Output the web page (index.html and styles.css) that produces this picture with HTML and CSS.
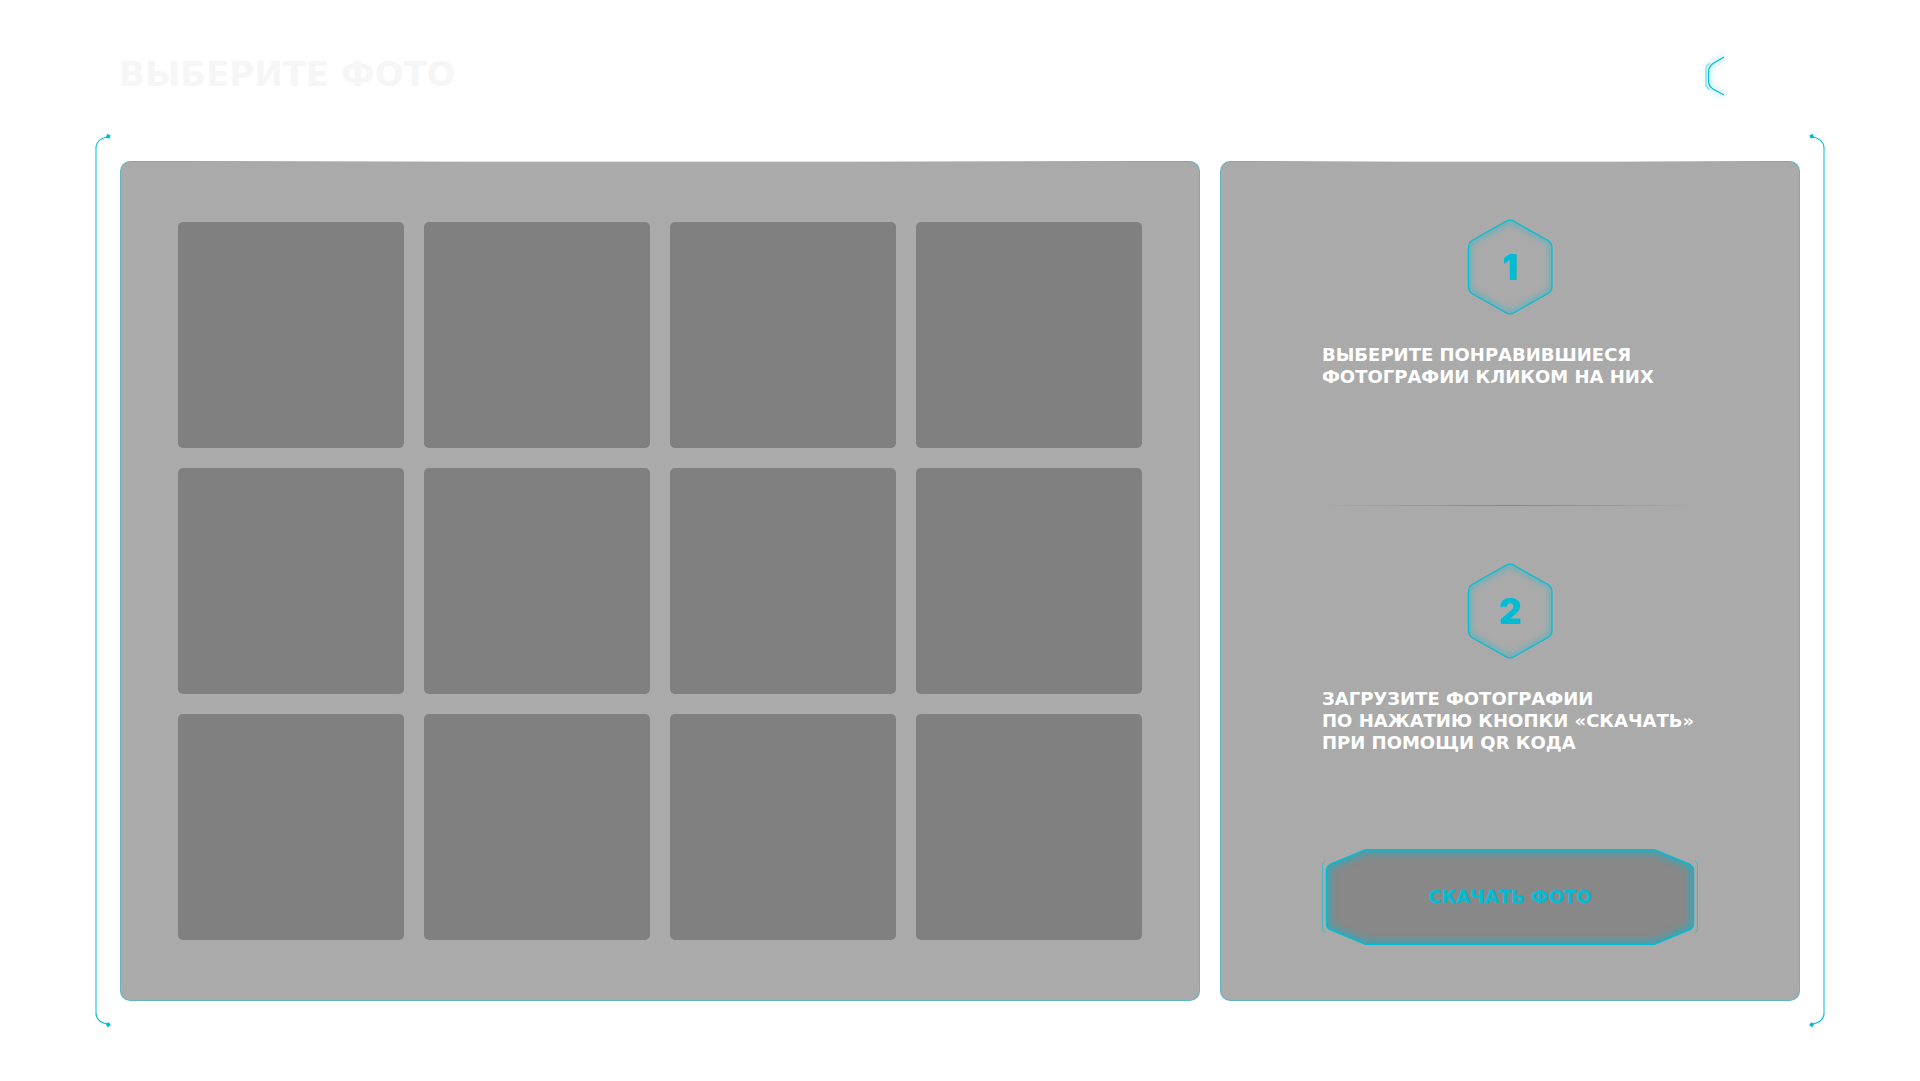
FILE: index.html
```html
<!DOCTYPE html>
<html lang="ru">
<head>
<meta charset="utf-8">
<meta name="viewport" content="width=device-width, initial-scale=1">
<title>Выберите фото</title>
<link rel="stylesheet" href="styles.css">
</head>
<body>
<svg class="defs" aria-hidden="true">
  <defs>
    <filter id="glow" x="-20%" y="-20%" width="140%" height="140%"><feGaussianBlur stdDeviation="3"/></filter>
    <path id="hex" d="M40 2.300Q44 0 48 2.300L82 21.500Q86 24 86 28.500V67.500Q86 72 82 74.500L48 93.700Q44 96 40 93.700L6 74.500Q2.500 72 2.500 67.500V28.500Q2.500 24 6 21.500Z"/>
    <clipPath id="hex-clip"><use href="#hex"/></clipPath>
    <path id="corner" d="M1 15V14Q2 6 12 4"/>
    <path id="dot" d="M12.500 .8L15.800 2.700L14 5.800L10.600 4.300Z"/>
  </defs>
</svg>
<header class="header">
  <h1 class="title">ВЫБЕРИТЕ ФОТО</h1>
  <button class="back" type="button" aria-label="Назад">
    <svg width="20" height="42" viewBox="0 0 20 42" fill="none" stroke="#00bcd4">
      <path d="M19 2L8 8.500Q3.500 12 3.500 17V26Q3.500 31 8 34L19 40" stroke-width="4" opacity=".3" filter="url(#glow)"/>
      <path d="M5 8.500Q1 10 1 15V28Q1 33 5 34.500" stroke-width="1.500" opacity=".4"/>
      <path d="M19 2L8 8.500Q3.500 12 3.500 17V26Q3.500 31 8 34L19 40" stroke-width="1.200"/>
    </svg>
  </button>
</header>
<main class="frame">
  <div class="bracket" aria-hidden="true">
    <svg width="16" height="15" viewBox="0 0 16 15"><use href="#corner" class="stroke"/><use href="#dot" class="dot"/></svg>
    <span class="rail"></span>
    <svg class="flip-y" width="16" height="15" viewBox="0 0 16 15"><use href="#corner" class="stroke"/><use href="#dot" class="dot"/></svg>
  </div>
  <div class="panels">
    <section class="panel gallery" aria-label="Фотографии">
      <button class="photo" type="button" aria-label="Фото 1"></button>
      <button class="photo" type="button" aria-label="Фото 2"></button>
      <button class="photo" type="button" aria-label="Фото 3"></button>
      <button class="photo" type="button" aria-label="Фото 4"></button>
      <button class="photo" type="button" aria-label="Фото 5"></button>
      <button class="photo" type="button" aria-label="Фото 6"></button>
      <button class="photo" type="button" aria-label="Фото 7"></button>
      <button class="photo" type="button" aria-label="Фото 8"></button>
      <button class="photo" type="button" aria-label="Фото 9"></button>
      <button class="photo" type="button" aria-label="Фото 10"></button>
      <button class="photo" type="button" aria-label="Фото 11"></button>
      <button class="photo" type="button" aria-label="Фото 12"></button>
    </section>
    <section class="panel guide">
      <div class="guide-body">
        <div class="step">
          <div class="badge">
            <svg class="backdrop" width="88" height="96" viewBox="0 0 88 96" fill="none" stroke="#00bcd4">
              <g clip-path="url(#hex-clip)"><use href="#hex" stroke-width="5" opacity=".5" filter="url(#glow)"/></g>
              <use href="#hex" stroke-width="1.200"/>
            </svg>
            <span class="number">1</span>
          </div>
          <p class="text">ВЫБЕРИТЕ ПОНРАВИВШИЕСЯ<br>ФОТОГРАФИИ КЛИКОМ НА НИХ</p>
        </div>
        <hr class="divider">
        <div class="step">
          <div class="badge">
            <svg class="backdrop" width="88" height="96" viewBox="0 0 88 96" fill="none" stroke="#00bcd4">
              <g clip-path="url(#hex-clip)"><use href="#hex" stroke-width="5" opacity=".5" filter="url(#glow)"/></g>
              <use href="#hex" stroke-width="1.200"/>
            </svg>
            <span class="number">2</span>
          </div>
          <p class="text">ЗАГРУЗИТЕ ФОТОГРАФИИ<br>ПО НАЖАТИЮ КНОПКИ «СКАЧАТЬ»<br>ПРИ ПОМОЩИ QR КОДА</p>
        </div>
        <button class="download" type="button">
          <svg class="backdrop" width="376" height="96" viewBox="0 0 376 96" fill="none" stroke="#00bcd4" aria-hidden="true">
            <defs>
              <path id="plate" d="M43.500 .7H332.500L368 15.500Q371.500 17.500 371.500 21V75Q371.500 78.500 368 80.500L332.500 95.300H43.500L8 80.500Q4.500 78.500 4.500 75V21Q4.500 17.500 8 15.500Z"/>
              <clipPath id="plate-clip"><use href="#plate"/></clipPath>
            </defs>
            <use href="#plate" fill="#888" stroke="none"/>
            <g clip-path="url(#plate-clip)"><use href="#plate" stroke-width="9" opacity=".5" filter="url(#glow)"/></g>
            <use href="#plate" stroke-width="1.400"/>
            <path d="M3 12Q.5 13 .5 17V79Q.5 83 3 84M373 12Q375.500 13 375.500 17V79Q375.500 83 373 84" opacity=".55"/>
          </svg>
          <span class="label">СКАЧАТЬ ФОТО</span>
        </button>
      </div>
    </section>
  </div>
  <div class="bracket flip-x" aria-hidden="true">
    <svg width="16" height="15" viewBox="0 0 16 15"><use href="#corner" class="stroke"/><use href="#dot" class="dot"/></svg>
    <span class="rail"></span>
    <svg class="flip-y" width="16" height="15" viewBox="0 0 16 15"><use href="#corner" class="stroke"/><use href="#dot" class="dot"/></svg>
  </div>
</main>
</body>
</html>
```

FILE: styles.css
```css
* { box-sizing: border-box; }

body {
  margin: 0;
  background: #fff;
  color: #fff;
  font-family: "DejaVu Sans", "Noto Sans", sans-serif;
  font-weight: 700;
}

button {
  padding: 0;
  border: 0;
  background: none;
  font: inherit;
  cursor: pointer;
}

svg { display: block; overflow: visible; }

.defs { position: absolute; width: 0; height: 0; }

.header {
  display: flex;
  justify-content: space-between;
  align-items: flex-start;
  padding: 55px 195px 36px 119px;
}

.title {
  margin: 0;
  color: #f6f6f6;
  font-size: 34px;
  line-height: 38px;
}

.frame {
  display: grid;
  grid-template-columns: 16px 1fr 16px;
  gap: 9px;
  padding: 0 95px 48px;
}

.bracket { display: flex; flex-direction: column; }
.rail { flex: 1; width: 2px; background: #80dee9; }
.stroke { fill: none; stroke: #00bcd4; stroke-width: 1.2; }
.dot { fill: #00bcd4; }
.flip-x { transform: scaleX(-1); }
.flip-y { transform: scaleY(-1); }

.panels {
  display: grid;
  grid-template-columns: 54fr 29fr;
  gap: 20px;
  padding: 28px 0 27px;
}

.panel {
  border: 1px solid transparent;
  border-radius: 10px;
  background:
    linear-gradient(#aaa, #aaa) padding-box,
    radial-gradient(ellipse 45% 20% at 50% 0, #dde6e7 40%, transparent) border-box,
    linear-gradient(#64b4c0, #64b4c0) border-box;
}

.gallery {
  display: grid;
  grid-template-columns: repeat(4, 1fr);
  align-content: center;
  gap: 20px;
  padding: 60px 57px;
}

.photo {
  aspect-ratio: 1;
  border-radius: 5px;
  background: #808080;
}

.guide {
  display: flex;
  justify-content: center;
  padding: 57px 20px 55px;
}

.guide-body { width: 376px; }

.badge {
  position: relative;
  display: flex;
  align-items: center;
  justify-content: center;
  width: 88px;
  height: 96px;
  margin: 0 auto 29px;
}

.backdrop { position: absolute; top: 0; left: 0; }

.number {
  position: relative;
  color: #00bcd4;
  font-family: Inter, sans-serif;
  font-size: 35px;
  font-weight: 900;
  line-height: 40px;
}

.text {
  margin: 0;
  font-size: 18px;
  line-height: 22px;
  white-space: nowrap;
}

.divider {
  height: 1px;
  margin: 117px 0 57px;
  border: 0;
  background: linear-gradient(to right, transparent, #00bcd4, transparent);
}

.download {
  position: relative;
  display: block;
  width: 100%;
  height: 96px;
  margin-top: 95px;
  color: #00bcd4;
  font-size: 18px;
  line-height: 22px;
}

.label { position: relative; }
```
